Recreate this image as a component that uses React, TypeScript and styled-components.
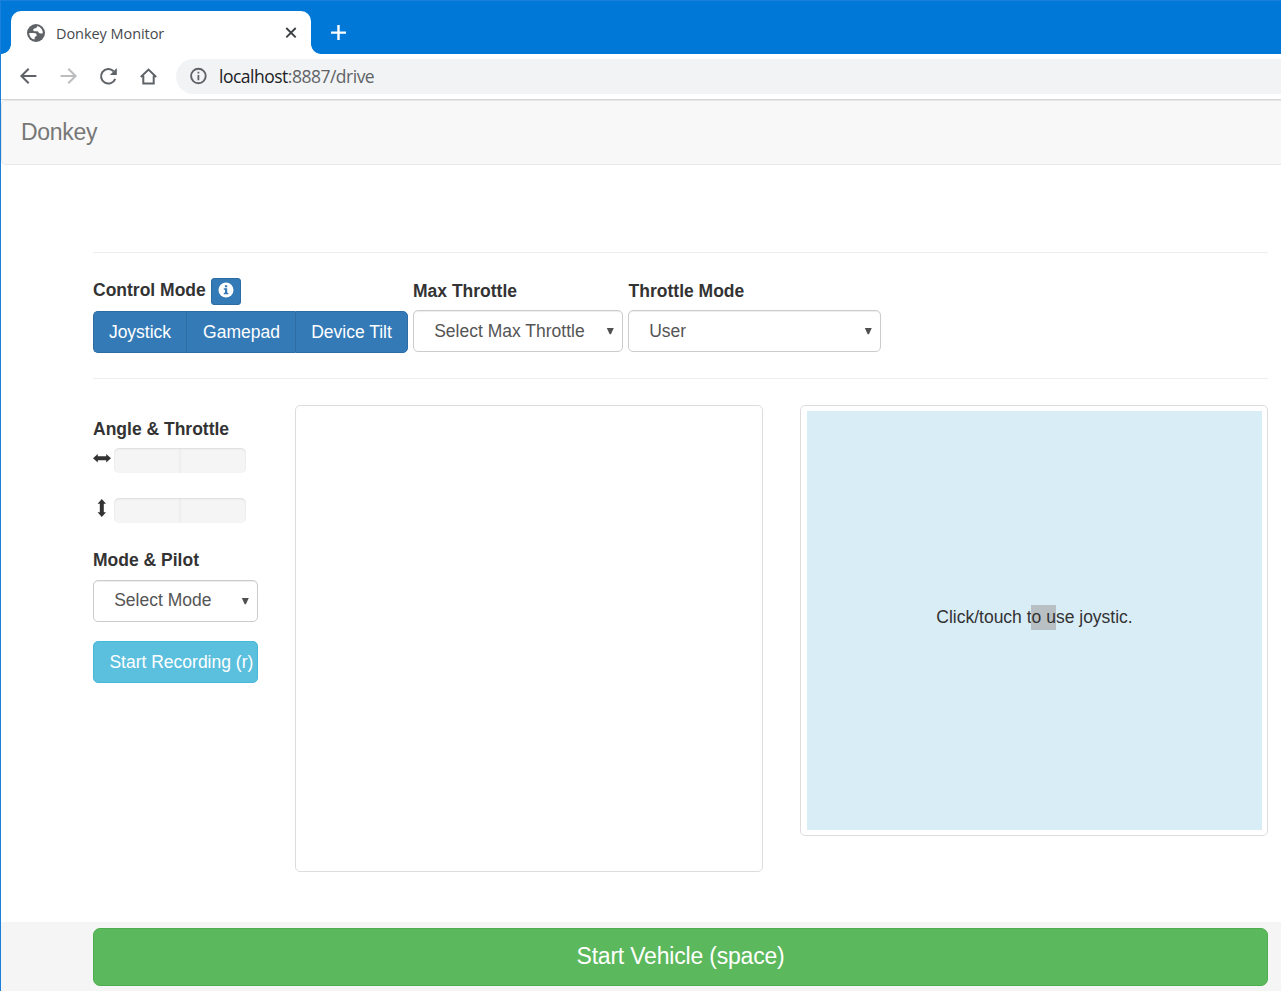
import React from "react";
import styled, { createGlobalStyle } from "styled-components";

const GlobalStyle = createGlobalStyle`
  * { box-sizing: border-box; }
  body {
    margin: 0;
    background: #fff;
    color: #333;
    font-family: "Liberation Sans", Arial, sans-serif;
    font-size: 17.5px;
    line-height: 25px;
  }
  button { font: inherit; }
`;

const Window = styled.div`
  height: 991px;
  overflow: hidden;
  border-left: 1px solid #1a80d9;
  display: flex;
  flex-direction: column;
`;

const TabStrip = styled.div`
  height: 54px;
  flex: none;
  background: #0078d7;
  border-top: 1px solid #1a80d9;
  display: flex;
  align-items: flex-end;
`;

const TabFoot = styled.div<{ $side: "left" | "right" }>`
  width: 10px;
  height: 10px;
  background: radial-gradient(
    circle at ${(p) => (p.$side === "left" ? "0 0" : "100% 0")},
    transparent 9.5px,
    #fff 10.2px
  );
`;

const Tab = styled.div`
  width: 300px;
  height: 43px;
  background: #fff;
  border-radius: 10px 10px 0 0;
  display: flex;
  align-items: center;
  padding: 0 14px 0 15px;
`;

const TabTitle = styled.span`
  flex: 1;
  margin-left: 10px;
  font-family: "Open Sans", "Noto Sans", sans-serif;
  font-size: 14.5px;
  letter-spacing: -0.06px;
  color: #45494d;
  padding-top: 1px;
`;

const NewTab = styled.div`
  align-self: center;
  margin: 10px 0 0 9px;
  display: flex;
`;

const Toolbar = styled.div`
  height: 46px;
  flex: none;
  display: flex;
  align-items: center;
  gap: 20px;
  padding: 0 0 1px 17px;
  border-bottom: 1px solid #d6d6d6;
`;

const ToolIcon = styled.svg`
  width: 20px;
  height: 20px;
  flex: none;
`;

const AddressBar = styled.div`
  flex: 1;
  height: 35px;
  margin-left: -2px;
  background: #f1f3f4;
  border-radius: 18px 0 0 18px;
  display: flex;
  align-items: center;
  padding-left: 12px;
`;

const Url = styled.span`
  margin-left: 11px;
  font-family: "Open Sans", "Noto Sans", sans-serif;
  font-size: 17.5px;
  letter-spacing: -0.5px;
  color: #5f6368;
  b { font-weight: 400; color: #202124; }
`;

const Navbar = styled.nav`
  height: 65px;
  flex: none;
  background: #f8f8f8;
  border: 1px solid #e7e7e7;
  border-right: 0;
  border-radius: 5px 0 0 5px;
  padding: 0 19px;
  color: #777;
  font-size: 23px;
  letter-spacing: -0.3px;
  line-height: 62px;
`;

const Content = styled.main`
  flex: 1;
  margin: 87px 13px 0 92px;
`;

const Controls = styled.section`
  height: 127px;
  border: solid #eee;
  border-width: 1px 0;
  padding-top: 25px;
  display: flex;
  align-items: flex-start;
`;

const Field = styled.div<{ $width: number; $gap: number }>`
  width: ${(p) => p.$width}px;
  margin-right: ${(p) => p.$gap}px;
`;

const LabelRow = styled.div<{ $height: number; $top?: number; $left?: number }>`
  height: ${(p) => p.$height}px;
  padding: ${(p) => p.$top ?? 0}px 0 0 ${(p) => p.$left ?? 0}px;
  display: flex;
  align-items: flex-start;
  gap: 5px;
`;

const Label = styled.label`
  font-weight: 700;
  white-space: nowrap;
`;

const InfoButton = styled.button`
  width: 30px;
  height: 27px;
  padding: 3px 0 0;
  background: #337ab7;
  border: 1px solid #2e6da4;
  border-radius: 3px;
  display: flex;
  justify-content: center;
`;

const ButtonGroup = styled.div`
  display: flex;
  height: 42px;
`;

const ModeButton = styled.button<{ $width: number }>`
  width: ${(p) => p.$width}px;
  padding: 1px 0 0;
  color: #fff;
  background: #337ab7;
  border: 1px solid #2e6da4;
  border-right-width: 0;
  &:first-child { border-radius: 5px 0 0 5px; }
  &:nth-child(2) { padding-left: 1px; }
  &:last-child { border-radius: 0 5px 5px 0; border-right-width: 1px; }
`;

const Select = styled.div<{ $lift?: number }>`
  height: 42px;
  border: 1px solid #ccc;
  border-radius: 5px;
  box-shadow: inset 0 1px 1px rgba(0, 0, 0, 0.075);
  color: #555;
  padding: 0 8px 0 20.2px;
  display: flex;
  align-items: center;
  justify-content: space-between;
  white-space: nowrap;
  span { padding-bottom: ${(p) => p.$lift ?? 0}px; }
`;

const Caret = styled.svg`
  width: 8px;
  height: 8px;
`;

const Columns = styled.section`
  display: flex;
  align-items: flex-start;
  padding-top: 26px;
`;

const Side = styled.div`
  width: 165px;
  margin-right: 37px;
  padding-top: 11px;
`;

const BarRow = styled.div`
  display: flex;
  height: 25px;
  margin: 7px 0 25px;
`;

const BarIcon = styled.svg`
  width: 18px;
  height: 20px;
  margin-right: 3px;
  fill: #333;
`;

const Bar = styled.div`
  width: 66px;
  background: #f5f5f5;
  box-shadow: inset 0 1px 2px rgba(0, 0, 0, 0.1);
  border-radius: 5px 0 0 5px;
  & + & { border-radius: 0 5px 5px 0; }
`;

const RecordButton = styled.button`
  width: 165px;
  height: 42px;
  margin-top: 19px;
  padding: 1px 0 0 15.4px;
  text-align: left;
  white-space: nowrap;
  color: #fff;
  background: #5bc0de;
  border: 1px solid #46b8da;
  border-radius: 5px;
`;

const Thumbnail = styled.div<{ $height: number }>`
  width: 468px;
  height: ${(p) => p.$height}px;
  margin-right: 37px;
  border: 1px solid #ddd;
  border-radius: 5px;
  padding: 5px 5px 5px 6px;
  &:last-child { margin-right: 0; }
`;

const Joystick = styled.div`
  height: 419px;
  background: #d9edf7;
  display: flex;
  align-items: center;
  justify-content: center;
  padding-bottom: 7px;
  span { white-space: pre; }
`;

const Marked = styled.mark`
  display: inline-block;
  background: #b9c0c3;
  color: inherit;
  margin-left: -0.6px;
  padding-left: 0.6px;
`;

const Footer = styled.footer`
  height: 69px;
  flex: none;
  background: #f5f5f5;
  padding: 6px 13px 5px 92px;
`;

const StartButton = styled.button`
  width: 100%;
  height: 58px;
  padding: 0 0 2px;
  color: #fff;
  background: #5cb85c;
  border: 1px solid #4cae4c;
  border-radius: 7px;
  font-size: 23px;
  letter-spacing: -0.2px;
`;

const Arrow = ({ color, flip }: { color: string; flip?: boolean }) => (
  <ToolIcon viewBox="0 0 20 20">
    <path
      d="M18.4 10H3.600M10.700 2.700 3.400 10l7.300 7.300"
      transform={flip ? "matrix(-1 0 0 1 21 0)" : undefined}
      fill="none"
      stroke={color}
      strokeWidth="2"
    />
  </ToolIcon>
);

const Dropdown = ({ text, lift }: { text: string; lift?: number }) => (
  <Select $lift={lift}>
    <span>{text}</span>
    <Caret viewBox="0 0 8 8">
      <path d="M.8 1h7L4.900 7.200H3.700z" fill="#505050" />
    </Caret>
  </Select>
);

const Meter = ({ vertical }: { vertical?: boolean }) => (
  <BarRow>
    <BarIcon viewBox="0 0 18 20">
      <path
        transform={vertical ? "rotate(90 9 10)" : undefined}
        d="M0 10.200l4.800-4.200v2.200h8.400V6L18 10.200l-4.800 4.200v-2.200H4.800v2.200z"
      />
    </BarIcon>
    <Bar />
    <Bar />
  </BarRow>
);

export default function App() {
  return (
    <>
      <GlobalStyle />
      <Window>
        <TabStrip>
          <TabFoot $side="left" />
          <Tab>
            <svg width="20" height="20" viewBox="0 0 20 20">
              <circle cx="10" cy="10" r="9" fill="#5f6368" />
              <path
                d="M11.300 3.100c-.3 1.500-.6 1.700-1.900 2.100-1.200.4-2.200.5-2.200 1.900 0 1.100 1 1.200 2.400 1.200h1.700c1.200 0 1.100 1.200 1.700 1.800.8.700 2.500.4 3.800.2A6.900 6.900 0 0 0 11.300 3.100zM3.200 10h4.600c1.900 0 2.900.9 2.900 2.200 0 1.300-1.800 1-2 2.100-.1.800.1 1.500-.2 2.300A6.900 6.900 0 0 1 3.200 10z"
                fill="#fff"
              />
            </svg>
            <TabTitle>Donkey Monitor</TabTitle>
            <svg width="12" height="12" viewBox="0 0 12 12">
              <path d="m1.300 1 9.400 9.400m0-9.400-9.400 9.400" stroke="#3c4043" strokeWidth="1.900" />
            </svg>
          </Tab>
          <TabFoot $side="right" />
          <NewTab>
            <svg width="17" height="16" viewBox="0 0 17 16">
              <path d="M8.500 .1v15M1 7.600h15" stroke="#fff" strokeWidth="2.400" />
            </svg>
          </NewTab>
        </TabStrip>
        <Toolbar>
          <Arrow color="#5f6368" />
          <Arrow color="#babcbe" flip />
          <ToolIcon viewBox="0 0 20 20">
            <path d="M17.200 12.800A7.300 7.300 0 1 1 15.600 5.200" fill="none" stroke="#5f6368" strokeWidth="2" />
            <path d="M18.800 2v6.900h-6.900z" fill="#5f6368" />
          </ToolIcon>
          <ToolIcon viewBox="0 0 20 20">
            <path d="M2.800 10.900 10.500 3.600l7.700 7.300M5.300 9.700v7.800h10.400V9.700" fill="none" stroke="#5f6368" strokeWidth="2" />
          </ToolIcon>
          <AddressBar>
            <svg width="20" height="20" viewBox="0 0 20 20">
              <circle cx="10.400" cy="10" r="7.300" fill="none" stroke="#5f6368" strokeWidth="1.900" />
              <path d="M10.400 9v5.200M10.400 5.700v1.900" stroke="#5f6368" strokeWidth="1.800" />
            </svg>
            <Url>
              <b>localhost</b>:8887/drive
            </Url>
          </AddressBar>
        </Toolbar>
        <Navbar>Donkey</Navbar>
        <Content>
          <Controls>
            <Field $width={315} $gap={5}>
              <LabelRow $height={33}>
                <Label>Control Mode</Label>
                <InfoButton>
                  <svg width="16" height="16" viewBox="0 0 16 16">
                    <circle cx="8" cy="8" r="7.500" fill="#fff" />
                    <path d="M6.900 3.200h2.300v2H6.900zM5.800 6.300h3.400v4.400h1.200v1.500H5.800v-1.500H7V7.800H5.800z" fill="#337ab7" />
                  </svg>
                </InfoButton>
              </LabelRow>
              <ButtonGroup>
                <ModeButton $width={93}>Joystick</ModeButton>
                <ModeButton $width={109}>Gamepad</ModeButton>
                <ModeButton $width={113}>Device Tilt</ModeButton>
              </ButtonGroup>
            </Field>
            <Field $width={210} $gap={5}>
              <LabelRow $height={32} $top={1}>
                <Label>Max Throttle</Label>
              </LabelRow>
              <Dropdown text="Select Max Throttle" />
            </Field>
            <Field $width={253} $gap={0}>
              <LabelRow $height={32} $top={1} $left={0.6}>
                <Label>Throttle Mode</Label>
              </LabelRow>
              <Dropdown text="User" />
            </Field>
          </Controls>
          <Columns>
            <Side>
              <LabelRow $height={25} $top={1}>
                <Label>Angle &amp; Throttle</Label>
              </LabelRow>
              <Meter />
              <Meter vertical />
              <LabelRow $height={32}>
                <Label>Mode &amp; Pilot</Label>
              </LabelRow>
              <Dropdown text="Select Mode" lift={2} />
              <RecordButton>Start Recording (r)</RecordButton>
            </Side>
            <Thumbnail $height={467} />
            <Thumbnail $height={431}>
              <Joystick>
                <span>
                  Click/touch t<Marked>o u</Marked>se joystic.
                </span>
              </Joystick>
            </Thumbnail>
          </Columns>
        </Content>
        <Footer>
          <StartButton>Start Vehicle (space)</StartButton>
        </Footer>
      </Window>
    </>
  );
}
